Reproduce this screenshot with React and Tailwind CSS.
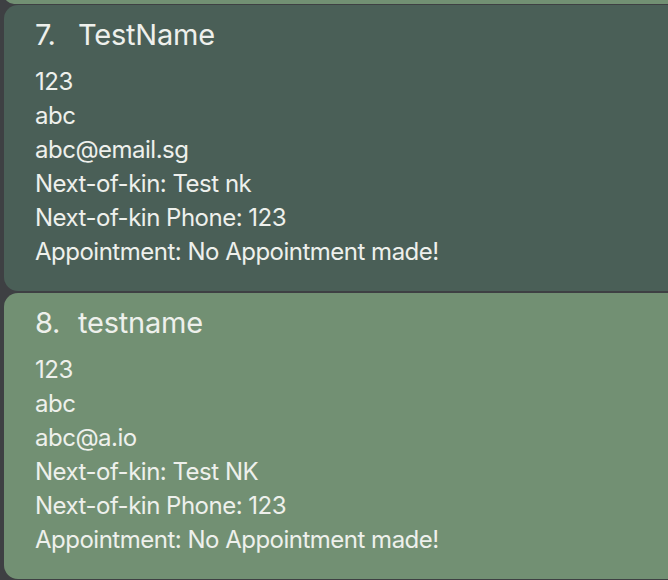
import React from 'react';

const persons = [
  {
    index: 7,
    name: 'TestName',
    phone: '123',
    address: 'abc',
    email: 'abc@email.sg',
    nok: 'Test nk',
    nokPhone: '123',
    appointment: 'No Appointment made!',
    bg: 'bg-[#4a5f57]',
  },
  {
    index: 8,
    name: 'testname',
    phone: '123',
    address: 'abc',
    email: 'abc@a.io',
    nok: 'Test NK',
    nokPhone: '123',
    appointment: 'No Appointment made!',
    bg: 'bg-[#729073]',
  },
];

const PersonCard = ({ p }) => (
  <div className={`${p.bg} rounded-l-[14px] h-[286px] pl-[31px] pt-[10px]`}>
    <div className="flex text-[29px] leading-[40px] tracking-[-0.2px]">
      <span className="w-[43px]">{p.index}.</span>
      <span>{p.name}</span>
    </div>
    <div className="mt-[10px] text-[24px] leading-[34px] tracking-[-0.5px]">
      <p>{p.phone}</p>
      <p>{p.address}</p>
      <p>{p.email}</p>
      <p>Next-of-kin: {p.nok}</p>
      <p>Next-of-kin Phone: {p.nokPhone}</p>
      <p>Appointment: {p.appointment}</p>
    </div>
  </div>
);

export default function App() {
  return (
    <div className="w-[668px] h-[580px] overflow-hidden bg-[#3e4043] pl-[4px] text-[#eef0ec] font-['Inter',sans-serif]">
      {/* tail of the previous card */}
      <div className="h-[20px] -mt-[16px] bg-[#729073] rounded-l-[14px]" />
      <div className="flex flex-col gap-[2px] mt-[1px]">
        {persons.map((p) => (
          <PersonCard key={p.index} p={p} />
        ))}
      </div>
    </div>
  );
}
